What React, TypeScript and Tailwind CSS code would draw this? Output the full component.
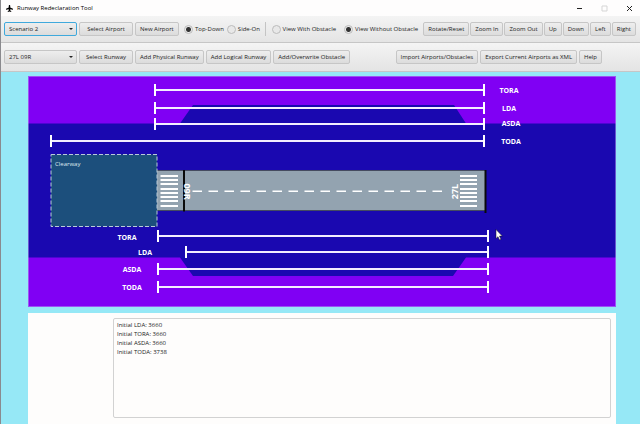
import React from "react";

const font = "font-['Open_Sans','Noto_Sans',sans-serif]";

function Btn({ children, wide = false }: { children: string; wide?: boolean }) {
  return (
    <button
      type="button"
      className={`flex h-3.5 shrink-0 items-center justify-center whitespace-nowrap rounded-[2px] border border-[#c6c6c6] bg-linear-to-b from-[#eeeeee] to-[#dcdcdc] ${wide ? "w-[54px]" : "px-1"}`}
    >
      {children}
    </button>
  );
}

function Picker({ label, value, focused = false }: { label: string; value: string; focused?: boolean }) {
  return (
    <div className="relative w-[73px] shrink-0">
      <select
        aria-label={label}
        defaultValue={value}
        className={`block h-3.5 w-full appearance-none rounded-[2px] border bg-linear-to-b from-[#eeeeee] to-[#dcdcdc] px-1 outline-none ${focused ? "border-[#3fa9dc]" : "border-[#c6c6c6]"}`}
      >
        <option>{value}</option>
      </select>
      <svg viewBox="0 0 4 2" className="pointer-events-none absolute top-1.5 right-1 h-0.5 w-1" aria-hidden="true">
        <path d="M0 0h4L2 2z" fill="#222" />
      </svg>
    </div>
  );
}

function Radio({ name, label, checked = false }: { name: string; label: string; checked?: boolean }) {
  return (
    <label className="flex shrink-0 items-center gap-0.5 whitespace-nowrap">
      <input
        type="radio"
        name={name}
        defaultChecked={checked}
        className="size-[9px] appearance-none rounded-full border border-[#bcbcbc] bg-[#e8e8e8] checked:bg-[radial-gradient(circle,#333_0_2px,#ececec_3px)]"
      />
      {label}
    </label>
  );
}

type Measure = { name: string; x1: number; x2: number; y: number; labelX: number; labelY: number };

const measures: Measure[] = [
  { name: "TORA", x1: 127, x2: 456, y: 14, labelX: 481, labelY: 17 },
  { name: "LDA", x1: 127, x2: 456, y: 32, labelX: 481, labelY: 35 },
  { name: "ASDA", x1: 127, x2: 456, y: 48, labelX: 483, labelY: 50 },
  { name: "TODA", x1: 23, x2: 456, y: 65, labelX: 483, labelY: 68 },
  { name: "TORA", x1: 130, x2: 460, y: 160, labelX: 99, labelY: 164 },
  { name: "LDA", x1: 158, x2: 460, y: 176, labelX: 117, labelY: 179 },
  { name: "ASDA", x1: 130, x2: 460, y: 193, labelX: 104, labelY: 196 },
  { name: "TODA", x1: 130, x2: 460, y: 211, labelX: 104, labelY: 214 },
];

const stripes = [100, 104, 108, 113, 117, 121, 125, 130];

function RunwayView() {
  return (
    <svg viewBox="0 0 588 231" className="block w-full" role="img" aria-label="Runway, top-down view">
      <rect width="588" height="231" fill="#8000f4" />
      <path d="M0 47.5H152L165 29H426L438 47.5H588V181.5H438L425 200H165L152 181.5H0Z" fill="#1a08b0" />
      <rect x="0.5" y="0.5" width="587" height="230" fill="none" stroke="#b8a8f0" strokeOpacity="0.5" />
      <rect x="129" y="94" width="328" height="41" fill="#93a3b0" />
      <path d="M129 94.5H457M129 134.5H457" stroke="#454b60" />
      <path d="M156 94V135.5M457.5 94V137" stroke="#0a0a0a" strokeWidth="2" />
      <rect x="23" y="78.5" width="106" height="72" fill="#1c4f7c" stroke="#b9cbd8" strokeDasharray="4 2" />
      <text x="27" y="90" fontSize="6" fill="#dfe8ef">Clearway</text>
      {stripes.map((y) => (
        <g key={y} fill="#fff">
          <rect x="132.5" y={y - 1} width="17.5" height="2" />
          <rect x="432" y={y - 1} width="17" height="2" />
        </g>
      ))}
      <path d="M164.5 115.3H415" stroke="#fff" strokeWidth="1.5" strokeDasharray="9.5 6.5" />
      <g fill="#fff" fontSize="9" fontWeight="700" textAnchor="middle">
        <text transform="translate(156 115.5) rotate(90)">09R</text>
        <text transform="translate(430 115.5) rotate(-90)">27L</text>
      </g>
      {measures.map((m) => (
        <g key={m.name + m.y}>
          <path d={`M${m.x1} ${m.y}H${m.x2}`} stroke="#f3eeff" strokeWidth="2" />
          <path d={`M${m.x1} ${m.y - 6}v12M${m.x2} ${m.y - 6}v12`} stroke="#fff" strokeWidth="2" />
          <text x={m.labelX} y={m.labelY} fontSize="7" fontWeight="700" textAnchor="middle" fill="#fff">
            {m.name}
          </text>
        </g>
      ))}
      <path d="M468 153.5v9l2-1.8 1.5 3.3 1.5-.7-1.5-3.2h2.8z" fill="#fff" stroke="#111" strokeWidth="0.5" />
    </svg>
  );
}

const bar = "flex items-center justify-between border-b border-[#c6c6c6] bg-linear-to-b from-[#f4f4f4] to-[#e4e4e4] pl-[3px] pr-1";

export default function App() {
  return (
    <div className={`${font} flex min-h-screen flex-col overflow-hidden border-l border-[#8a8a8e] bg-[#96e8f6] text-[6px] leading-[9px] text-[#222]`}>
      <header className="flex h-4 items-center bg-[#fefdfd] pr-[7px] pl-[5px] text-black">
        <svg viewBox="0 0 14 14" className="size-[7px]" aria-hidden="true">
          <path d="M7 0c1 0 1.5 1 1.5 2.5V5L14 7.5v2L8.5 8.5V11l2 1.5V14L7 13.2 3.5 14v-1.5l2-1.5V8.5L0 9.5v-2L5.5 5V2.5C5.5 1 6 0 7 0Z" fill="#000" />
        </svg>
        <h1 className="ml-1 flex-1">Runway Redeclaration Tool</h1>
        <div className="flex items-center gap-[18px]">
          <button type="button" aria-label="Minimize">
            <svg viewBox="0 0 7 7" className="size-[7px]"><path d="M1 3.5h5" stroke="#222" /></svg>
          </button>
          <button type="button" aria-label="Maximize" disabled>
            <svg viewBox="0 0 7 7" className="size-[7px]"><path d="M1 1h5v5H1z" fill="none" stroke="#d5d5d5" /></svg>
          </button>
          <button type="button" aria-label="Close">
            <svg viewBox="0 0 7 7" className="size-[7px]"><path d="m1 1 5 5M6 1 1 6" stroke="#222" /></svg>
          </button>
        </div>
      </header>

      <div className={`${bar} h-[27px]`}>
        <div className="flex items-center gap-0.5">
          <Picker label="Airport" value="Scenario 2" focused />
          <Btn wide>Select Airport</Btn>
          <Btn>New Airport</Btn>
        </div>
        <div className="flex items-center gap-[3px]">
          <Radio name="angle" label="Top-Down" checked />
          <Radio name="angle" label="Side-On" />
        </div>
        <div className="h-3.5 w-px bg-[#c4c4c4]" />
        <div className="flex items-center gap-2">
          <Radio name="obstacle" label="View With Obstacle" />
          <Radio name="obstacle" label="View Without Obstacle" checked />
        </div>
        <div className="flex items-center gap-px">
          <Btn>Rotate/Reset</Btn>
          <Btn>Zoom In</Btn>
          <Btn>Zoom Out</Btn>
          <Btn>Up</Btn>
          <Btn>Down</Btn>
          <Btn>Left</Btn>
          <Btn>Right</Btn>
        </div>
      </div>

      <div className={`${bar} h-[29px]`}>
        <div className="flex items-center gap-0.5">
          <Picker label="Runway" value="27L 09R" />
          <Btn wide>Select Runway</Btn>
          <Btn>Add Physical Runway</Btn>
          <Btn>Add Logical Runway</Btn>
          <Btn>Add/Overwrite Obstacle</Btn>
        </div>
        <div className="mr-[34px] flex items-center gap-0.5">
          <Btn>Import Airports/Obstacles</Btn>
          <Btn>Export Current Airports as XML</Btn>
          <Btn>Help</Btn>
        </div>
      </div>

      <main className="flex flex-1 flex-col gap-1.5 pt-1 pr-6 pl-[27px]">
        <RunwayView />
        <section className="flex flex-1 bg-[#fefdfc] pt-[5px] pr-[5px] pb-1.5 pl-[85px]">
          <textarea
            readOnly
            aria-label="Declared distances"
            className="block w-full resize-none rounded-[2px] border border-[#d2d2d2] bg-[#fefdfc] px-[3px] py-0.5 outline-none"
            defaultValue={"Initial LDA: 3660\nInitial TORA: 3660\nInitial ASDA: 3660\nInitial TODA: 3738"}
          />
        </section>
      </main>
    </div>
  );
}
